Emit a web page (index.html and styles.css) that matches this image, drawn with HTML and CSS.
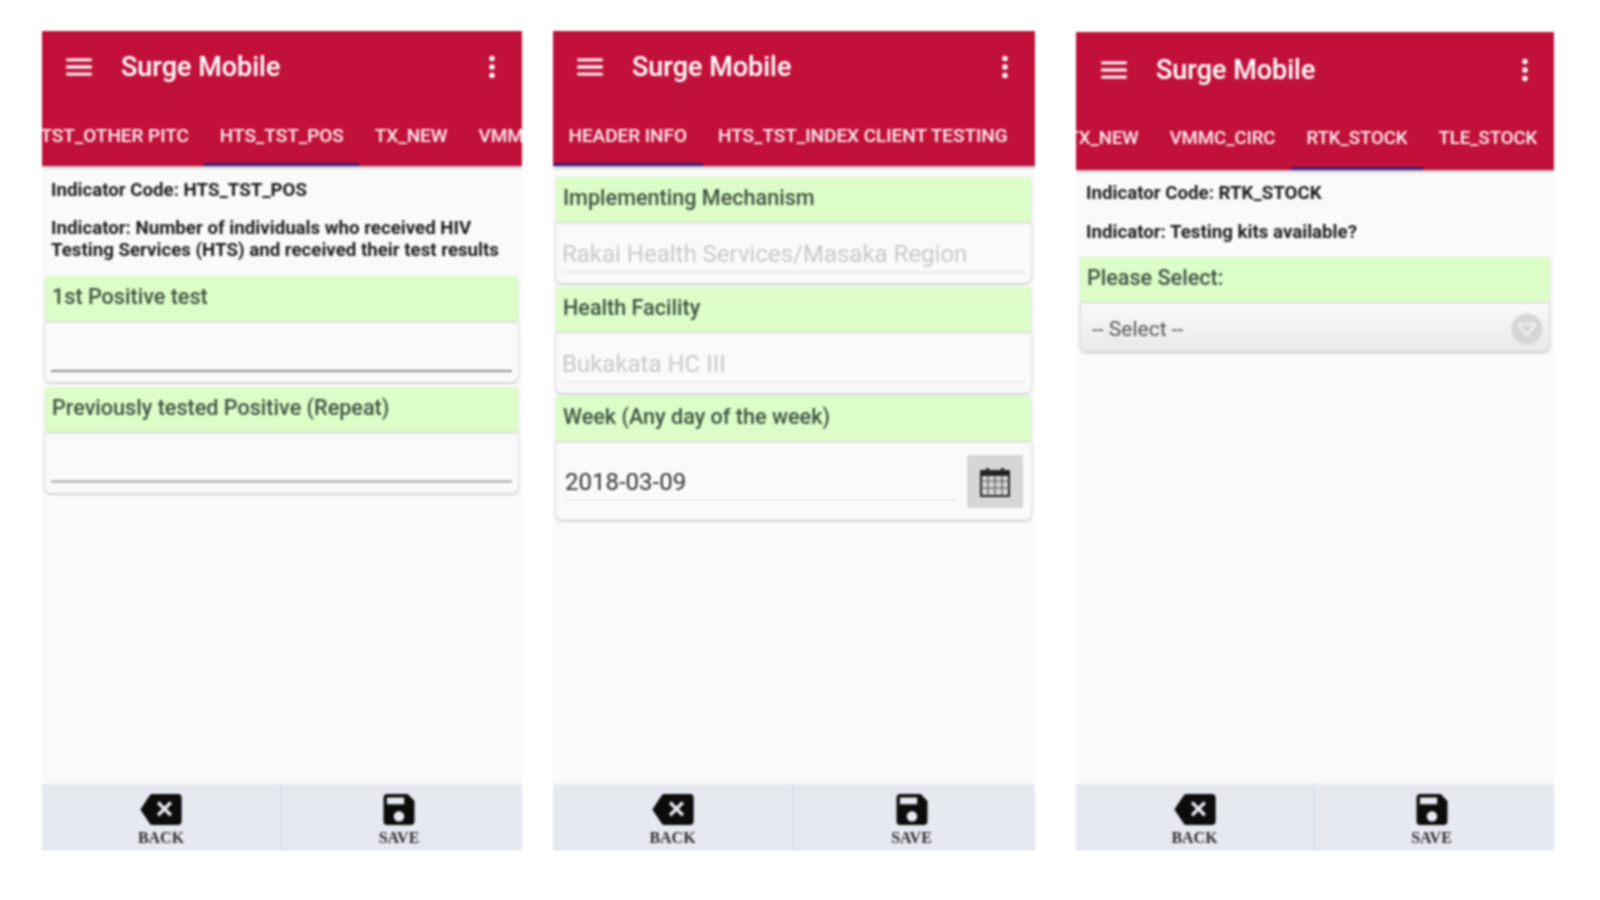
FILE: index.html
```html
<!DOCTYPE html>
<html lang="en">
<head>
<meta charset="utf-8">
<title>Surge Mobile</title>
<link rel="stylesheet" href="styles.css">
</head>
<body>
<svg class="defs" aria-hidden="true">
  <symbol id="i-menu" viewBox="0 0 24 24"><path d="M3 18h18v-2H3v2zm0-5h18v-2H3v2zm0-7v2h18V6H3z"/></symbol>
  <symbol id="i-more" viewBox="0 0 24 24"><path d="M12 8c1.1 0 2-.9 2-2s-.9-2-2-2-2 .9-2 2 .9 2 2 2zm0 2c-1.1 0-2 .9-2 2s.9 2 2 2 2-.9 2-2-.9-2-2-2zm0 6c-1.1 0-2 .9-2 2s.9 2 2 2 2-.9 2-2-.9-2-2-2z"/></symbol>
  <symbol id="i-back" viewBox="0 0 24 18"><path d="M22 0H7c-.69 0-1.23.35-1.59.88L0 9l5.41 8.11c.36.53.9.89 1.59.89h15c1.1 0 2-.9 2-2V2c0-1.1-.9-2-2-2zm-3.6 11.6L17 13l-3-3-3 3-1.4-1.4 3-3-3-3L11 4.200l3 3 3-3 1.400 1.400-3 3z"/></symbol>
  <symbol id="i-save" viewBox="3 3 18 18"><path d="M17 3H5c-1.11 0-2 .9-2 2v14c0 1.1.89 2 2 2h14c1.1 0 2-.9 2-2V7l-4-4zm-5 16c-1.66 0-3-1.34-3-3s1.34-3 3-3 3 1.34 3 3-1.34 3-3 3zm3-10H5V5h10v4z"/></symbol>
</svg>

<main class="stage">
  <section class="phone phone-a">
    <header class="appbar">
      <div class="toolbar">
        <svg class="tool-icon"><use href="#i-menu"/></svg>
        <span class="title">Surge Mobile</span>
        <svg class="tool-icon more"><use href="#i-more"/></svg>
      </div>
      <nav class="tabs tabs-a">
        <span class="tab">HTS_TST_OTHER PITC</span>
        <span class="tab active">HTS_TST_POS</span>
        <span class="tab">TX_NEW</span>
        <span class="tab">VMMC</span>
      </nav>
    </header>
    <div class="content">
      <div class="info">
        <p>Indicator Code: HTS_TST_POS</p>
        <p>Indicator: Number of individuals who received HIV Testing Services (HTS) and received their test results</p>
      </div>
      <div class="card">
        <div class="label">1st Positive test</div>
        <div class="body"><div class="field strong"></div></div>
      </div>
      <div class="card">
        <div class="label">Previously tested Positive (Repeat)</div>
        <div class="body"><div class="field medium"></div></div>
      </div>
    </div>
    <footer class="actions">
      <div class="action"><svg class="icon-back"><use href="#i-back"/></svg><span>BACK</span></div>
      <div class="action"><svg class="icon-save"><use href="#i-save"/></svg><span>SAVE</span></div>
    </footer>
  </section>

  <section class="phone phone-b">
    <header class="appbar">
      <div class="toolbar">
        <svg class="tool-icon"><use href="#i-menu"/></svg>
        <span class="title">Surge Mobile</span>
        <svg class="tool-icon more"><use href="#i-more"/></svg>
      </div>
      <nav class="tabs">
        <span class="tab active">HEADER INFO</span>
        <span class="tab">HTS_TST_INDEX CLIENT TESTING</span>
      </nav>
    </header>
    <div class="content content-form">
      <div class="card">
        <div class="label">Implementing Mechanism</div>
        <div class="body"><div class="field">Rakai Health Services/Masaka Region</div></div>
      </div>
      <div class="card">
        <div class="label">Health Facility</div>
        <div class="body"><div class="field">Bukakata HC III</div></div>
      </div>
      <div class="card card-tight">
        <div class="label">Week (Any day of the week)</div>
        <div class="body date-body">
          <div class="date-field">2018-03-09</div>
          <div class="date-btn">
            <svg class="cal" viewBox="0 0 34 32">
              <path class="cal-solid" d="M2 5h30v5H2z"/>
              <path class="cal-solid" d="M8 2h3v5H8zM23 2h3v5h-3z"/>
              <path class="cal-line" d="M3 5h28v25H3z"/>
              <path class="cal-grid" d="M3 15h28M3 22h28M10 10v20M17 10v20M24 10v20"/>
            </svg>
          </div>
        </div>
      </div>
    </div>
    <footer class="actions">
      <div class="action"><svg class="icon-back"><use href="#i-back"/></svg><span>BACK</span></div>
      <div class="action"><svg class="icon-save"><use href="#i-save"/></svg><span>SAVE</span></div>
    </footer>
  </section>

  <section class="phone phone-c">
    <header class="appbar">
      <div class="toolbar">
        <svg class="tool-icon"><use href="#i-menu"/></svg>
        <span class="title">Surge Mobile</span>
        <svg class="tool-icon more"><use href="#i-more"/></svg>
      </div>
      <nav class="tabs tabs-c">
        <span class="tab">TX_NEW</span>
        <span class="tab">VMMC_CIRC</span>
        <span class="tab active">RTK_STOCK</span>
        <span class="tab">TLE_STOCK</span>
      </nav>
    </header>
    <div class="content content-c">
      <div class="info">
        <p>Indicator Code: RTK_STOCK</p>
        <p>Indicator: Testing kits available?</p>
      </div>
      <div class="label label-solo">Please Select:</div>
      <div class="select">
        <span>-- Select --</span>
        <svg class="chev" viewBox="0 0 32 32">
          <circle cx="16" cy="16" r="15.5"/>
          <path d="M7 11h18M7 11l9 11 9-11"/>
        </svg>
      </div>
    </div>
    <footer class="actions">
      <div class="action"><svg class="icon-back"><use href="#i-back"/></svg><span>BACK</span></div>
      <div class="action"><svg class="icon-save"><use href="#i-save"/></svg><span>SAVE</span></div>
    </footer>
  </section>
</main>
</body>
</html>
```

FILE: styles.css
```css
* { box-sizing: border-box; }
html, body { margin: 0; height: 100%; background: #fff; }
body { font-family: Roboto, "Liberation Sans", sans-serif; overflow: hidden; }
.defs { display: none; }

.stage {
  display: flex;
  align-items: flex-start;
  padding: 31px 0 0 42px;
}
.phone {
  display: flex;
  flex-direction: column;
  height: 819px;
  background: #fafafa;
  overflow: hidden;
  filter: blur(0.8px);
}
.phone-a { width: 480px; margin-right: 31px; }
.phone-b { width: 482px; margin-right: 41px; }
.phone-c { width: 478px; margin-top: 1px; height: 818px; }

.appbar {
  flex: none;
  background: #c1113a;
  color: #fff;
  box-shadow: 0 2px 3px rgba(0, 0, 0, .22);
  position: relative;
}
.toolbar {
  display: flex;
  align-items: center;
  height: 70px;
  padding: 2px 13px 0 20px;
}
.phone-c .toolbar { height: 73px; padding-left: 21px; padding-right: 12px; }
.tool-icon { width: 34px; height: 34px; fill: #fff; flex: none; }
.more { margin-left: auto; }
.title {
  margin-left: 25px;
  font-size: 27px;
  font-weight: 500;
  color: #fff;
}
.tabs {
  display: flex;
  height: 65px;
  overflow: hidden;
  white-space: nowrap;
}
.tabs-a { margin-left: -61.5px; }
.tabs-c { margin-left: -24px; }
.tab {
  flex: none;
  padding: 23px 15.5px 0;
  font-size: 19px;
  font-weight: 500;
  letter-spacing: -.05px;
  color: #fdeef1;
  border-bottom: 3px solid transparent;
}
.phone-c .tab { padding-top: 22px; font-size: 18.6px; }
.tab.active { border-bottom-color: #3f1a78; }

.content { flex: 1; padding: 0 4px 0 3px; }
.content-form { padding-top: 11px; }
.content-c { padding-right: 3px; padding-left: 4px; }
.info { padding: 13px 6px 0; font-size: 18.7px; font-weight: 700; line-height: 22px; color: #1c1c1c; }
.info p { margin: 0 0 16px; }
.info p:last-child { margin-bottom: 15px; }
.content-c .info { padding-top: 12px; }
.content-c .info p { margin-bottom: 17px; }
.content-c .info p:last-child { margin-bottom: 14px; }

.card { margin-bottom: 5px; }
.content-form .card { margin-bottom: 3.5px; }
.content-form .card-tight { margin-bottom: 0; }
.label {
  height: 45px;
  padding: 0 7px;
  line-height: 41px;
  font-size: 21.6px;
  font-weight: 500;
  color: #3f5443;
  background: #dcfdc8;
  border-radius: 2px 2px 0 0;
  box-shadow: 0 1px 2px rgba(0, 0, 0, .2);
  position: relative;
}
.body {
  height: 61px;
  padding: 0 6px;
  background: #fafafa;
  border-radius: 0 0 6px 6px;
  box-shadow: 0 1px 3px rgba(0, 0, 0, .28);
}
.field {
  height: 51px;
  padding-top: 16px;
  font-size: 24px;
  line-height: 32px;
  color: #c9c9c9;
  border-bottom: 2px solid #ececec;
}
.field.strong { border-bottom: 2px solid #909090; }
.field.medium { border-bottom: 3px solid #bdbdbd; }

.date-body {
  display: flex;
  height: 79px;
  padding: 14px 8px 0 9px;
}
.date-field {
  flex: 1;
  height: 46px;
  margin-right: 11px;
  padding-top: 11px;
  font-size: 24px;
  line-height: 32px;
  color: #333;
  border-bottom: 2px solid #ececec;
}
.date-btn {
  display: flex;
  align-items: center;
  justify-content: center;
  width: 56px;
  height: 53px;
  background: #d6d6d6;
  border-radius: 2px;
}
.cal { width: 34px; height: 32px; }
.cal-solid { fill: #222; }
.cal-line { fill: none; stroke: #222; stroke-width: 2; }
.cal-grid { fill: none; stroke: #555; stroke-width: 1.2; }

.label-solo { margin-right: 1px; }
.select {
  display: flex;
  align-items: center;
  justify-content: space-between;
  height: 49px;
  margin: 1px 1px 0 0;
  padding: 3px 6px 0 11px;
  font-size: 21px;
  color: #555;
  background: linear-gradient(#fafafa, #e9e9e9);
  border: 1px solid #dcdcdc;
  border-top: 0;
  border-radius: 0 0 7px 7px;
  box-shadow: 0 1px 2px rgba(0, 0, 0, .25);
}
.chev { width: 32px; height: 32px; flex: none; }
.chev circle { fill: #d6d6d6; }
.chev path { fill: none; stroke: #f4f4f4; stroke-width: 2; stroke-linejoin: round; }

.actions {
  flex: none;
  display: flex;
  height: 66px;
  background: #e6e9f0;
  border-bottom: 1px solid #cfd8e6;
}
.action {
  flex: none;
  width: 50%;
  display: flex;
  flex-direction: column;
  align-items: center;
  padding-top: 10px;
  color: #2e2e2e;
  font-family: "Liberation Serif", serif;
  font-weight: 700;
  font-size: 16px;
  line-height: 17px;
}
.action:first-child { border-right: 2px solid #d6deea; }
.action:last-child { padding-right: 6px; }
.icon-back { width: 42px; height: 31px; fill: #0c0c0c; margin-bottom: 4px; }
.icon-save { width: 32px; height: 31px; fill: #0c0c0c; margin-bottom: 4px; }
```
